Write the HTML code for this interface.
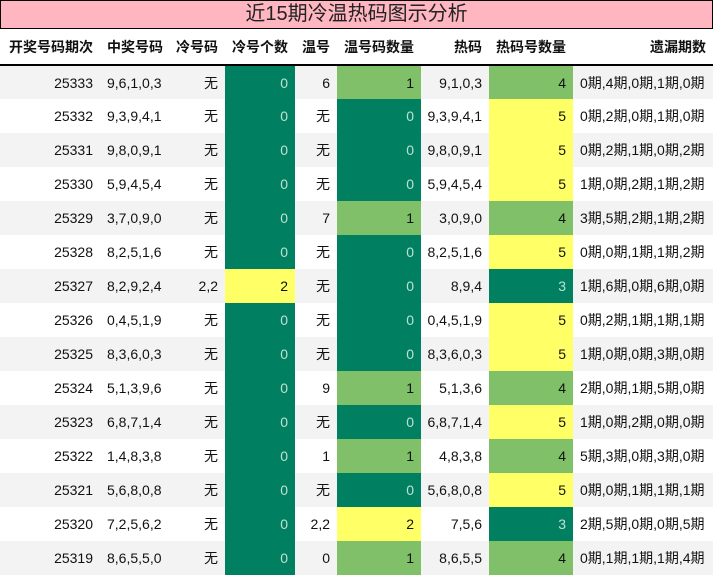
<!DOCTYPE html>
<html><head><meta charset="utf-8"><style>
*{margin:0;padding:0;box-sizing:border-box}
body{width:713px;height:576px;overflow:hidden;background:#fff;font-family:"Liberation Sans","Noto Sans CJK SC",sans-serif;color:#111}
.title{position:absolute;left:0;top:0;width:713px;height:29px;background:#ffb6c1;border:1px solid #000;text-align:center;font-size:20px;line-height:27px;color:#222}
table{position:absolute;left:0;top:29px;border-collapse:collapse;table-layout:fixed;width:713px}
th{height:36px;font-size:14px;font-weight:bold;text-align:right;padding-right:7px;border-bottom:2px solid #000;white-space:nowrap}
td{height:34px;font-size:14px;text-align:right;padding-right:7px;white-space:nowrap}
tr.g td{background:#f3f3f3}
td.l{text-align:left;padding-left:7px;padding-right:0}
th.l{text-align:left;padding-left:7px}
tr td.d{background:#008060;color:#bfe0d4}
tr td.y{background:#ffff66}
tr td.lg{background:#80c068}
</style></head><body>
<div class="title">近15期冷温热码图示分析</div>
<table>
<colgroup><col style="width:100px"><col style="width:68px"><col style="width:57px"><col style="width:70px"><col style="width:42px"><col style="width:84px"><col style="width:68px"><col style="width:84px"><col style="width:140px"></colgroup>
<tr><th>开奖号码期次</th><th class="l">中奖号码</th><th>冷号码</th><th>冷号个数</th><th>温号</th><th>温号码数量</th><th>热码</th><th class="l">热码号数量</th><th>遗漏期数</th></tr>
<tr class="g"><td>25333</td><td class="l">9,6,1,0,3</td><td>无</td><td class="d">0</td><td>6</td><td class="lg">1</td><td>9,1,0,3</td><td class="lg">4</td><td class="l">0期,4期,0期,1期,0期</td></tr>
<tr><td>25332</td><td class="l">9,3,9,4,1</td><td>无</td><td class="d">0</td><td>无</td><td class="d">0</td><td>9,3,9,4,1</td><td class="y">5</td><td class="l">0期,2期,0期,1期,0期</td></tr>
<tr class="g"><td>25331</td><td class="l">9,8,0,9,1</td><td>无</td><td class="d">0</td><td>无</td><td class="d">0</td><td>9,8,0,9,1</td><td class="y">5</td><td class="l">0期,2期,1期,0期,2期</td></tr>
<tr><td>25330</td><td class="l">5,9,4,5,4</td><td>无</td><td class="d">0</td><td>无</td><td class="d">0</td><td>5,9,4,5,4</td><td class="y">5</td><td class="l">1期,0期,2期,1期,2期</td></tr>
<tr class="g"><td>25329</td><td class="l">3,7,0,9,0</td><td>无</td><td class="d">0</td><td>7</td><td class="lg">1</td><td>3,0,9,0</td><td class="lg">4</td><td class="l">3期,5期,2期,1期,2期</td></tr>
<tr><td>25328</td><td class="l">8,2,5,1,6</td><td>无</td><td class="d">0</td><td>无</td><td class="d">0</td><td>8,2,5,1,6</td><td class="y">5</td><td class="l">0期,0期,1期,1期,2期</td></tr>
<tr class="g"><td>25327</td><td class="l">8,2,9,2,4</td><td>2,2</td><td class="y">2</td><td>无</td><td class="d">0</td><td>8,9,4</td><td class="d">3</td><td class="l">1期,6期,0期,6期,0期</td></tr>
<tr><td>25326</td><td class="l">0,4,5,1,9</td><td>无</td><td class="d">0</td><td>无</td><td class="d">0</td><td>0,4,5,1,9</td><td class="y">5</td><td class="l">0期,2期,1期,1期,1期</td></tr>
<tr class="g"><td>25325</td><td class="l">8,3,6,0,3</td><td>无</td><td class="d">0</td><td>无</td><td class="d">0</td><td>8,3,6,0,3</td><td class="y">5</td><td class="l">1期,0期,0期,3期,0期</td></tr>
<tr><td>25324</td><td class="l">5,1,3,9,6</td><td>无</td><td class="d">0</td><td>9</td><td class="lg">1</td><td>5,1,3,6</td><td class="lg">4</td><td class="l">2期,0期,1期,5期,0期</td></tr>
<tr class="g"><td>25323</td><td class="l">6,8,7,1,4</td><td>无</td><td class="d">0</td><td>无</td><td class="d">0</td><td>6,8,7,1,4</td><td class="y">5</td><td class="l">1期,0期,2期,0期,0期</td></tr>
<tr><td>25322</td><td class="l">1,4,8,3,8</td><td>无</td><td class="d">0</td><td>1</td><td class="lg">1</td><td>4,8,3,8</td><td class="lg">4</td><td class="l">5期,3期,0期,3期,0期</td></tr>
<tr class="g"><td>25321</td><td class="l">5,6,8,0,8</td><td>无</td><td class="d">0</td><td>无</td><td class="d">0</td><td>5,6,8,0,8</td><td class="y">5</td><td class="l">0期,0期,1期,1期,1期</td></tr>
<tr><td>25320</td><td class="l">7,2,5,6,2</td><td>无</td><td class="d">0</td><td>2,2</td><td class="y">2</td><td>7,5,6</td><td class="d">3</td><td class="l">2期,5期,0期,0期,5期</td></tr>
<tr class="g"><td>25319</td><td class="l">8,6,5,5,0</td><td>无</td><td class="d">0</td><td>0</td><td class="lg">1</td><td>8,6,5,5</td><td class="lg">4</td><td class="l">0期,1期,1期,1期,4期</td></tr>
</table>
</body></html>
